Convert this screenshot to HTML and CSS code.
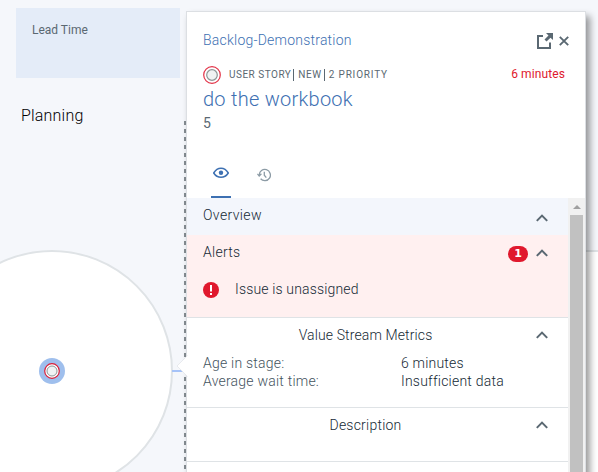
FILE: index.html
```html
<!DOCTYPE html>
<html lang="en">
<head>
<meta charset="utf-8">
<title>Backlog-Demonstration</title>
<link rel="stylesheet" href="styles.css">
</head>
<body>
<main class="canvas">
  <section class="lead"><span class="t-lead">Lead Time</span></section>
  <h2 class="stage"><span class="t-stage">Planning</span></h2>
  <svg class="map" width="598" height="472" viewBox="0 0 598 472">
    <rect x="560" y="251" width="60" height="240" fill="#fff" stroke="#dfe3e6" stroke-width="2"/>
    <circle cx="52" cy="371" r="120" fill="#fff" stroke="#dfe3e6" stroke-width="2"/>
    <path d="M172 371H190" stroke="#a6c3f8" stroke-width="2"/>
    <path d="M185 121V472" stroke="#858d92" stroke-width="2" stroke-dasharray="4 4"/>
    <circle cx="52" cy="371" r="13" fill="#9fbfed"/>
    <circle cx="52" cy="371" r="7.3" fill="#fff" stroke="#da1e37" stroke-width="1.2"/>
    <circle cx="52" cy="371" r="5" fill="#f0f3f4" stroke="#8c9696" stroke-width="1"/>
  </svg>

  <aside class="panel">
    <svg class="pointer" width="12" height="22" viewBox="0 0 12 22"><path d="M12 0L1 11L12 22Z" fill="#fff"/><path d="M11.500 .5L1 11L11.500 21.500" fill="none" stroke="#dfe3e6" stroke-width=".7"/></svg>
    <header class="head">
      <div class="row top">
        <a class="t-project">Backlog-Demonstration</a>
        <span class="tools">
          <svg width="17" height="17" viewBox="0 0 17 17"><path d="M7 3H2V15H14V9.500" fill="none" stroke="#5a6872" stroke-width="2"/><path d="M10 0H17V7L14.500 4.800L10.500 8.500L8.500 6.500L12.500 2.500Z" fill="#5a6872"/></svg>
          <svg width="10" height="10" viewBox="0 0 10 10"><path d="M.8 .8L9.200 9.200M9.200 .8L.8 9.200" stroke="#5a6872" stroke-width="1.900"/></svg>
        </span>
      </div>
      <div class="row meta">
        <svg width="18" height="18" viewBox="0 0 18 18"><circle cx="9" cy="9" r="8.300" fill="#fff" stroke="#e23348" stroke-width="1.200"/><circle cx="9" cy="9" r="5.300" fill="#f0f3f3" stroke="#8c9696" stroke-width="1.200"/></svg>
        <span class="tag t-type">USER STORY</span><i class="bar"></i><span class="tag t-state">NEW</span><i class="bar"></i><span class="tag t-prio">2 PRIORITY</span>
        <span class="age"><span class="t-age">6 minutes</span></span>
      </div>
      <h1 class="title"><span class="t-title">do the workbook</span></h1>
      <div class="points">5</div>
      <nav class="tabs">
        <span class="tab active"><svg width="16" height="12" viewBox="0 0 16 12"><path d="M.7 6Q3.500 1.200 8 1.200T15.300 6Q12.500 10.300 8 10.300T.7 6Z" fill="none" stroke="#3d70b2" stroke-width="1.500"/><circle cx="8" cy="5.800" r="2.200" fill="#3d70b2"/></svg></span>
        <span class="tab"><svg width="14" height="14" viewBox="0 0 14 14" fill="none" stroke="#8c9ba5" stroke-width="1.300"><path d="M2.200 7A5.600 5.600 0 1 1 3.600 10.800"/><path d="M.4 5.800L2.200 8L4.400 5.800M7.300 3.800V7.300L9.300 9.600"/></svg></span>
      </nav>
    </header>
    <div class="scroller">
      <div class="sections">
        <section class="sec overview"><div class="bar-head"><span class="t-overview">Overview</span><svg class="chev" width="12" height="8" viewBox="0 0 12 8"><path d="M.8 6.900L6 1.600L11.200 6.900"/></svg></div></section>
        <section class="sec alerts">
          <div class="bar-head"><span class="t-alerts">Alerts</span><b class="badge">1</b><svg class="chev" width="12" height="8" viewBox="0 0 12 8"><path d="M.8 6.900L6 1.600L11.200 6.900"/></svg></div>
          <div class="issue"><svg width="16" height="16" viewBox="0 0 16 16"><circle cx="8" cy="8" r="8" fill="#e0182d"/><path d="M7 3H9V9.600H7ZM7 11H9V13H7Z" fill="#fff"/></svg><span class="t-issue">Issue is unassigned</span></div>
        </section>
        <section class="sec metrics">
          <div class="bar-head center"><span class="t-metrics">Value Stream Metrics</span><svg class="chev" width="12" height="8" viewBox="0 0 12 8"><path d="M.8 6.900L6 1.600L11.200 6.900"/></svg></div>
          <dl class="facts"><dt><span class="t-stageage">Age in stage:</span></dt><dd><span class="t-min">6 minutes</span></dd><dt><span class="t-wait">Average wait time:</span></dt><dd><span class="t-data">Insufficient data</span></dd></dl>
        </section>
        <section class="sec desc"><div class="bar-head center"><span class="t-desc">Description</span><svg class="chev" width="12" height="8" viewBox="0 0 12 8"><path d="M.8 6.900L6 1.600L11.200 6.900"/></svg></div></section>
      </div>
      <div class="track"><svg width="8" height="4" viewBox="0 0 8 4"><path d="M4 0L8 4H0Z" fill="#a0a0a0"/></svg><div class="thumb"></div></div>
    </div>
  </aside>
</main>
</body>
</html>
```
FILE: styles.css
```css
* { box-sizing: border-box; }
body { margin: 0; font: 300 14px/18px Roboto, "Liberation Sans", sans-serif; color: #152935; }
.canvas { position: relative; width: 598px; height: 472px; overflow: hidden; background: #f5f7fb; padding: 8px 0 0 16px; }
.lead { width: 164px; height: 70px; padding: 13px 16px; background: #e4ecf8; color: #5a6872; font-size: 12px; font-weight: 400; }
.stage { margin: 28px 0 0 5px; font-size: 16px; line-height: 20px; font-weight: 300; letter-spacing: .2px; color: #000; }
.map { position: absolute; inset: 0; }
.stage, .lead { position: relative; z-index: 1; }
.panel { position: absolute; z-index: 2; left: 186px; top: 11px; width: 400px; height: 490px; display: flex; flex-direction: column; background: #fff; border: 1px solid #dcdfe3; box-shadow: 4px 5px 7px rgba(0,0,0,.4); }
.pointer { position: absolute; left: -11px; top: 343px; }
.head { height: 186px; padding: 19px 17px 0 16px; }
.row { display: flex; align-items: center; }
.top { height: 18px; justify-content: space-between; color: #3d70b2; font-weight: 300; }
.t-project { letter-spacing: .22px; }
.tools { display: flex; align-items: center; gap: 6px; margin: 2px -1px 0 0; }
.meta { height: 18px; margin-top: 17px; }
.tag { font-size: 10px; line-height: 12px; font-weight: 400; color: #5a6872; letter-spacing: .5px; }
.bar { width: 1px; height: 12px; background: #5a6872; margin: 0 4px 0 2px; }
.t-type { margin-left: 8px; }
.t-state { letter-spacing: .6px; }
.t-prio { letter-spacing: .8px; }
.age { margin: -2px 3px 0 auto; font-size: 12px; font-weight: 400; letter-spacing: .1px; color: #e0182d; }
.title { margin: 2px 0 0; font-size: 20px; line-height: 26px; font-weight: 300; letter-spacing: .26px; color: #3d70b2; }
.points { margin-top: 2px; line-height: 18px; color: #5a6872; font-weight: 400; }
.tabs { display: flex; gap: 24px; margin: 30px 0 0 8px; height: 36px; }
.tab { width: 20px; display: flex; justify-content: center; padding-top: 5px; }
.tab + .tab { padding: 6px 2px 0 0; }
.active { border-bottom: 2px solid #3d70b2; }
.scroller { flex: 1; min-height: 0; display: flex; overflow: hidden; }
.sections { width: 381px; }
.sec { border-bottom: 1px solid #dfe3e6; padding: 0 20px 0 16px; }
.bar-head { height: 34px; display: flex; align-items: center; }
.bar-head .chev { margin-left: auto; margin-top: 6px; }
.chev path { fill: none; stroke: #5a6872; stroke-width: 2; }
.overview { height: 37px; border: 0; background: #f3f6fc; }
.t-overview { letter-spacing: .38px; }
.t-alerts { letter-spacing: .25px; }
.alerts { height: 83px; background: #fff0f0; }
.badge { margin: 4px 8px 0 auto; width: 20px; height: 16px; border-radius: 8px; background: #e0182d; color: #fff; text-align: center; font: 700 11px/16px "DejaVu Sans", sans-serif; }
.bar-head .badge + .chev { margin-left: 0; margin-top: 2px; }
.issue { display: flex; align-items: center; gap: 16px; height: 36px; margin-top: 2px; letter-spacing: .16px; }
.issue svg { margin-top: 2px; }
.metrics { height: 90px; }
.center { justify-content: center; position: relative; padding-right: 20px; letter-spacing: .12px; }
.t-desc { letter-spacing: .22px; }
.bar-head.center .chev { position: absolute; right: 0; top: 13px; margin: 0; }
.facts { margin: 2px 0 0; display: grid; grid-template-columns: 198px 1fr; }
.facts dt { color: #44535e; letter-spacing: .22px; }
.t-min { letter-spacing: .2px; }
.t-data { letter-spacing: .22px; }
.facts dd { margin: 0; }
.desc { height: 54px; }
.track { width: 17px; background: #f1f1f1; display: flex; flex-direction: column; align-items: center; padding-top: 7px; }
.track svg { flex: none; }
.thumb { width: 13px; flex: 1; margin-top: 6px; background: #c1c1c1; }
```
